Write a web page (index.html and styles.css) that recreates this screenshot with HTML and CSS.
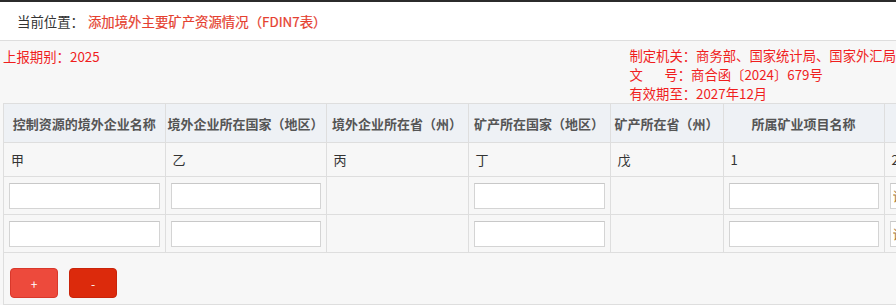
FILE: index.html
```html
<!DOCTYPE html>
<html lang="zh-CN">

<head>
    <meta charset="UTF-8">
    <meta name="viewport" content="width=device-width, initial-scale=1.0">
    <title>添加境外主要矿产资源情况</title>
    <link rel="stylesheet" href="styles.css">
</head>

<body>
    <div id="crumb">
        <span class="here">当前位置：</span>
        <span class="title">添加境外主要矿产资源情况（FDIN7表）</span>
    </div>
    <div id="main">
        <div id="info">
            <div class="period">上报期别：2025</div>
            <div class="meta">
                <div>制定机关：商务部、国家统计局、国家外汇局</div>
                <div><span class="wen">文</span>号：商合函〔2024〕679号</div>
                <div>有效期至：2027年12月</div>
            </div>
        </div>
        <div id="sheet">
            <table>
                <colgroup>
                    <col class="w161">
                    <col class="w161">
                    <col class="w142">
                    <col class="w142">
                    <col class="w113">
                    <col class="w161">
                    <col class="w161">
                </colgroup>
                <thead>
                    <tr>
                        <th>控制资源的境外企业名称</th>
                        <th>境外企业所在国家（地区）</th>
                        <th>境外企业所在省（州）</th>
                        <th>矿产所在国家（地区）</th>
                        <th>矿产所在省（州）</th>
                        <th>所属矿业项目名称</th>
                        <th>矿种</th>
                    </tr>
                </thead>
                <tbody>
                    <tr class="code">
                        <td>甲</td>
                        <td>乙</td>
                        <td>丙</td>
                        <td>丁</td>
                        <td>戊</td>
                        <td>1</td>
                        <td>2</td>
                    </tr>
                    <tr class="fill">
                        <td><input type="text"></td>
                        <td><input type="text"></td>
                        <td></td>
                        <td><input type="text"></td>
                        <td></td>
                        <td><input type="text"></td>
                        <td><input type="text" placeholder="请选择"></td>
                    </tr>
                    <tr class="fill">
                        <td><input type="text"></td>
                        <td><input type="text"></td>
                        <td></td>
                        <td><input type="text"></td>
                        <td></td>
                        <td><input type="text"></td>
                        <td><input type="text" placeholder="请选择"></td>
                    </tr>
                </tbody>
            </table>
            <div id="actions">
                <button class="add">+</button>
                <button class="del">-</button>
            </div>
        </div>
    </div>
</body>

</html>
```

FILE: styles.css
```css
html, body {
    margin: 0;
    height: 100%;
    overflow: hidden;
    background-color: #f7f7f7;
    font-family: "Noto Sans CJK SC", "Noto Sans", sans-serif;
}

#crumb {
    height: 38px;
    display: flex;
    align-items: center;
    padding-left: 17px;
    background-color: #fff;
    border-top: 2px solid #2b2b2b;
    border-bottom: 1px solid #dedede;
    font-size: 13.4px;
}

.here {
    color: #333;
    margin-right: 4px;
}

.title {
    color: #e5402f; /* red page title */
    -webkit-text-stroke: 0.2px #e5402f;
}

#main {
    padding-left: 3px;
}

#info {
    display: flex;
    justify-content: space-between;
    height: 62px;
    color: #f01e1e;
}

.period {
    font-size: 13.4px;
    line-height: 19px;
    padding-top: 6px;
}

.meta {
    font-size: 13.33px;
    line-height: 19px;
    padding-top: 5px;
    white-space: nowrap;
}

.wen {
    display: inline-block;
    width: 35px;
}

#sheet {
    width: 1100px;
    border-left: 1px solid #dedede;
    border-bottom: 1px solid #dedede;
}

table {
    width: 1041px;
    border-collapse: collapse;
    table-layout: fixed;
    font-size: 13px;
}

.w161 { width: 161px; }
.w142 { width: 142px; }
.w113 { width: 113px; }

th, td {
    border: 1px solid #dedede;
    padding: 0 6px;
    white-space: nowrap;
    overflow: hidden;
}

th {
    height: 38px;
    background-color: #eef1f5;
    color: #555;
    font-weight: bold;
    text-align: center;
    padding: 0 2px;
}

thead tr th:first-child, tbody tr td:first-child {
    border-left: none;
}

.code td {
    height: 33px;
    color: #333;
    padding-left: 7px;
}

.fill td {
    height: 37px;
    padding: 0 5px;
}

input {
    display: block;
    box-sizing: border-box;
    width: 100%;
    height: 26px;
    margin: 0;
    border: 1px solid #d4d4d4;
    border-top-color: #c8c8c8;
    background-color: #fff;
    font-family: inherit;
    font-size: 13px;
    padding: 0 2px;
}

input::placeholder {
    color: #a8772b;
}

#actions {
    display: flex;
    gap: 11px;
    padding: 15px 0 6px 6px;
}

#actions button {
    width: 48px;
    height: 30px;
    border-radius: 4px;
    color: #fff;
    font-size: 12px;
    font-family: inherit;
    cursor: pointer;
}

.add {
    background-color: #ed4a3c;
    border: 1px solid #d9382b;
}

.del {
    background-color: #dc2a0c;
    border: 1px solid #c9240a;
}
```
